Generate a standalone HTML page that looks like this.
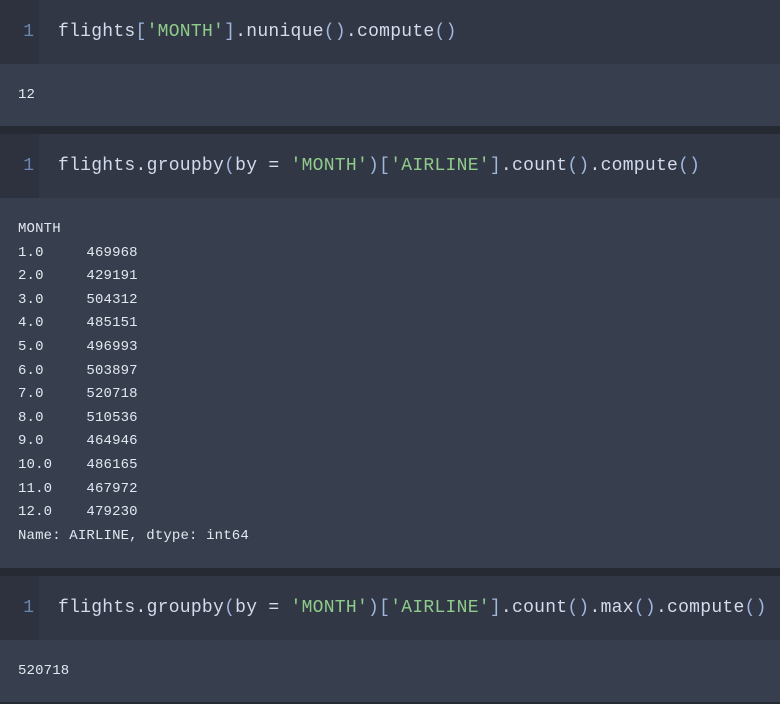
<!DOCTYPE html>
<html><head><style>
body{margin:0;width:780px;height:704px;background:#252a33;overflow:hidden;font-family:"Liberation Mono",monospace}
.in{position:absolute;left:0;width:780px;height:64px;background:#313745}
.g{position:absolute;left:0;top:0;width:39px;height:64px;background:#2d323e;color:#6b86b3;font-size:18px;line-height:64px;text-align:right;box-sizing:border-box;padding-right:5px}
.c{position:absolute;left:58px;top:0;line-height:64px;font-size:18px;color:#d3dbec;white-space:pre;letter-spacing:0.27px}
.s{color:#8fcc8a}.b{color:#9fb6dd}
.out{position:absolute;left:0;width:780px;background:#373f4e;color:#e3e8f0;font-size:14px;white-space:pre;box-sizing:border-box;padding-left:18px;letter-spacing:0.15px}
</style></head><body>
<div class="in" style="top:0"><div class="g">1</div><div class="c">flights<span class="b">[</span><span class="s">'MONTH'</span><span class="b">]</span>.nunique<span class="b">()</span>.compute<span class="b">()</span></div></div>
<div class="out" style="top:64px;height:62px;line-height:62px">12</div>
<div class="in" style="top:134px"><div class="g">1</div><div class="c">flights.groupby<span class="b">(</span>by = <span class="s">'MONTH'</span><span class="b">)[</span><span class="s">'AIRLINE'</span><span class="b">]</span>.count<span class="b">()</span>.compute<span class="b">()</span></div></div>
<div class="out" style="top:198px;height:370px;line-height:23.6px;padding-top:20px">MONTH
1.0     469968
2.0     429191
3.0     504312
4.0     485151
5.0     496993
6.0     503897
7.0     520718
8.0     510536
9.0     464946
10.0    486165
11.0    467972
12.0    479230
Name: AIRLINE, dtype: int64</div>
<div class="in" style="top:576px"><div class="g">1</div><div class="c">flights.groupby<span class="b">(</span>by = <span class="s">'MONTH'</span><span class="b">)[</span><span class="s">'AIRLINE'</span><span class="b">]</span>.count<span class="b">()</span>.max<span class="b">()</span>.compute<span class="b">()</span></div></div>
<div class="out" style="top:640px;height:62px;line-height:62px">520718</div>
</body></html>
